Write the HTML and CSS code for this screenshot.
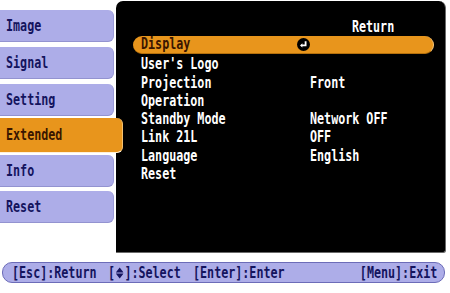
FILE: index.html
```html
<!DOCTYPE html>
<html lang="en">
<head>
    <meta charset="UTF-8">
    <title>Extended</title>
    <link rel="stylesheet" href="styles.css">
</head>
<body>

<div class="screen">
    <div class="main">
        <!-- Left menu tabs -->
        <div class="tabs">
            <div class="tab"><span class="t">Image</span></div>
            <div class="tab"><span class="t">Signal</span></div>
            <div class="tab"><span class="t">Setting</span></div>
            <div class="tab active"><span class="t">Extended</span></div>
            <div class="tab"><span class="t">Info</span></div>
            <div class="tab"><span class="t">Reset</span></div>
        </div>

        <!-- Sub menu -->
        <div class="panel">
            <div class="return-row"><span class="t t-right">Return</span></div>
            <div class="row selected">
                <span class="label"><span class="t">Display</span></span>
                <span class="value">
                    <svg class="enter-icon" width="13" height="13" viewBox="0 0 13 13">
                        <circle cx="6.5" cy="6.5" r="6.5" fill="#000"/>
                        <path d="M8.6 3.2 V7.4 H4.6" fill="none" stroke="#fff" stroke-width="1.8"/>
                        <path d="M3 7.4 L5.4 5.2 L5.4 9.6 Z" fill="#fff"/>
                    </svg>
                </span>
            </div>
            <div class="row"><span class="label"><span class="t">User's Logo</span></span><span class="value"></span></div>
            <div class="row"><span class="label"><span class="t">Projection</span></span><span class="value"><span class="t">Front</span></span></div>
            <div class="row"><span class="label"><span class="t">Operation</span></span><span class="value"></span></div>
            <div class="row"><span class="label"><span class="t">Standby Mode</span></span><span class="value"><span class="t">Network OFF</span></span></div>
            <div class="row"><span class="label"><span class="t">Link 21L</span></span><span class="value"><span class="t">OFF</span></span></div>
            <div class="row"><span class="label"><span class="t">Language</span></span><span class="value"><span class="t">English</span></span></div>
            <div class="row"><span class="label"><span class="t">Reset</span></span><span class="value"></span></div>
        </div>
    </div>

    <!-- Key help bar -->
    <div class="help-bar">
        <span class="key key-esc"><span class="t">[Esc]:Return</span></span>
        <span class="key key-select"><span class="t">[<svg class="updown" width="10" height="12" viewBox="0 0 11 12"><path d="M5.5 0 L11 5.4 H0 Z M0 6.6 H11 L5.5 12 Z" fill="#14145e"/></svg>]:Select</span></span>
        <span class="key key-enter"><span class="t">[Enter]:Enter</span></span>
        <span class="key"><span class="t t-right">[Menu]:Exit</span></span>
    </div>
</div>

</body>
</html>
```
FILE: styles.css
```css
body {
    margin: 0;
    background-color: #fff;
    font-family: "DejaVu Sans Mono", "Liberation Mono", monospace;
    font-weight: bold;
    font-size: 15px;
}
.screen {
    width: 450px;
    height: 293px;
    display: flex;
    flex-direction: column;
}
/* narrow, tall OSD lettering */
.t {
    display: inline-block;
    white-space: nowrap;
    transform: scaleX(0.78);
    transform-origin: left center;
}
.t-right {
    transform-origin: right center;
}
.main {
    display: flex;
    height: 252px;
    padding-top: 1px;
}
.tabs {
    width: 116px;
    padding-top: 9px;
    display: flex;
    flex-direction: column;
}
.tab {
    width: 114px;
    height: 32px;
    margin-bottom: 5px;
    box-sizing: border-box;
    padding-left: 6px;
    display: flex;
    align-items: center;
    background-color: #adade8;
    color: #14145e;
    border-radius: 0 6px 6px 0;
    border-bottom: 1px solid #9393d0;
    border-right: 1px solid #9b9bd8;
}
.tab.active {
    width: 123px;
    height: 35px;
    margin-top: -3px;
    margin-bottom: 2px;
    position: relative;
    z-index: 1;
    background-color: #e8951c;
    color: #3a1500;
    border-bottom: 1px solid #fff0d8;
    border-right: 1px solid #f4c070;
}
.tab.active + .tab {
    margin-bottom: 4px;
}
.panel {
    flex: 1;
    margin-right: 4px;
    background-color: #000;
    border-radius: 7px 7px 3px 0;
    border-right: 1px solid #6a6a6a;
    border-bottom: 1px solid #6a6a6a;
    padding: 17px 11px 0 17px;
    color: #fff;
}
.return-row {
    height: 18px;
    text-align: right;
    padding-right: 40px;
    line-height: 18px;
}
.row {
    display: flex;
    height: 18.3px;
    line-height: 18px;
    padding-left: 8px;
    border-radius: 9px;
}
.row.selected {
    height: 17px;
    margin-bottom: 1.3px;
    background-color: #e8951c;
    color: #3a1500;
    line-height: 17px;
    border-right: 1px solid #f7c57a;
    border-bottom: 1px solid #b5700c;
}
.label {
    width: 169px;
}
.value {
    flex: 1;
}
.enter-icon {
    margin-left: -13px;
    vertical-align: -2px;
}
.help-bar {
    margin: 9px 5px 0 2px;
    height: 21px;
    box-sizing: border-box;
    padding: 0 7px 0 9px;
    display: flex;
    align-items: center;
    background-color: #adade8;
    color: #14145e;
    border: 1px solid #6c6cb8;
    border-radius: 10px;
}
.key-esc {
    width: 96px;
}
.key-select {
    width: 85px;
}
.key-enter {
    flex: 1;
}
.updown {
    vertical-align: -1px;
    margin: 0 1px;
}
```
